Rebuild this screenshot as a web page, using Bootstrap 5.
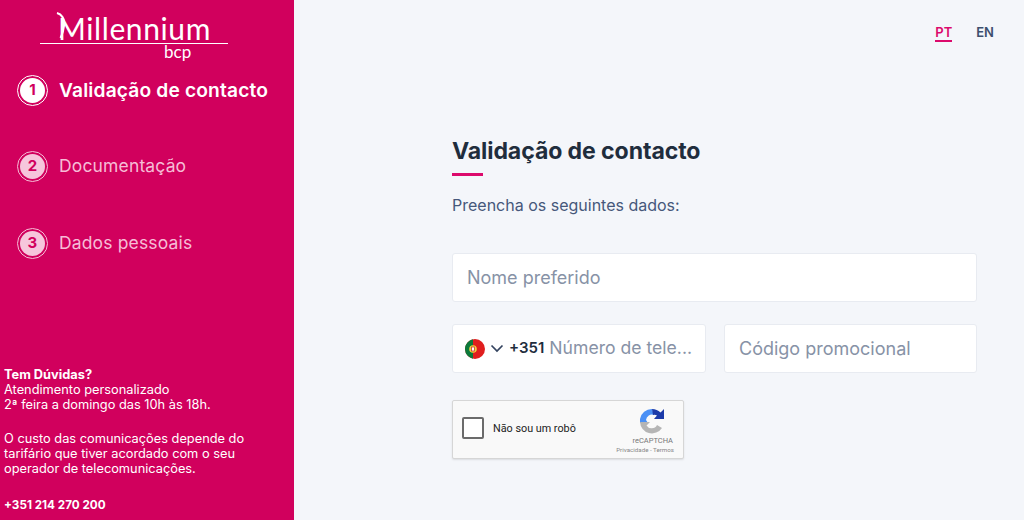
<!DOCTYPE html>
<html lang="pt">
<head>
    <meta charset="UTF-8">
    <title>Validação de contacto</title>
    <link href="https://cdn.jsdelivr.net/npm/bootstrap@5.3.3/dist/css/bootstrap.min.css" rel="stylesheet">
    <style>
        html, body { height: 100%; }
        body { background: #f4f6fa; font-family: "Inter", "Noto Sans", sans-serif; overflow: hidden; }
        .app-shell { height: 520px; }
        .side-panel { width: 294px; background: #d1005d; color: #fff; flex: none; }
        .logo-box { height: 60px; padding: 0 0 0 40px; width: 228px; position: relative; }
        .logo-word { font-family: "Lato", sans-serif; font-weight: 400; font-size: 30px; line-height: 30px; height: 30px; padding: 13px 0 0 18px; box-sizing: content-box; letter-spacing: .6px; }
        .logo-swoosh { position: absolute; left: 54px; top: 10px; }
        .logo-rule { height: 1px; background: #fff; width: 188px; }
        .logo-bcp { font-family: "Lato", sans-serif; font-weight: 400; font-size: 17px; line-height: 14px; padding: 1px 0 0 124px; }
        .step-list { padding: 14.5px 0 0 17px; }
        .step-row { height: 31px; margin-bottom: 45.5px; gap: 11px; font-size: 17.5px; color: #f6bcd6; font-weight: 400; letter-spacing: .15px; }
        .step-row.is-active { color: #fff; font-weight: 600; font-size: 19.2px; }
        .step-ring { width: 31px; height: 31px; border: 1.5px solid currentColor; border-radius: 50%; padding: 2px; flex: none; }
        .step-dot { width: 100%; height: 100%; border-radius: 50%; background: #f6c6dc; color: #d1005d; font-size: 15px; font-weight: 700; }
        .step-row.is-active .step-ring { border-color: #fff; }
        .step-row.is-active .step-dot { background: #fff; }
        .help-box { font-size: 12.8px; line-height: 15px; padding: 0 0 7px 4px; }
        .help-hours { margin: 0 0 19px; }
        .help-cost { margin: 0 0 22px; }
        .help-phone { font-size: 11.7px; font-weight: 700; }
        .main-pane { min-width: 0; }
        .lang-bar { height: 66px; padding: 25px 30px 0 0; gap: 24px; font-size: 13px; line-height: 15px; font-weight: 600; color: #3d4f6e; }
        .lang-on { color: #dc0a6c; border-bottom: 2px solid #dc0a6c; height: 17px; }
        .form-wrap { width: 525px; margin: 0 47px 0 158px; padding-top: 71px; }
        .form-title { font-size: 23.1px; font-weight: 700; color: #1f2d3d; line-height: 28px; margin: 0; letter-spacing: -.1px; }
        .title-mark { width: 31px; height: 3px; background: #dc0a6c; margin: 8px 0 18px; }
        .form-sub { font-size: 16px; color: #46587a; line-height: 22px; margin-bottom: 37px; }
        .field-box { background: #fff; border: 1px solid #e8ebf1; border-radius: 3px; height: 49px; font-size: 18px; color: #8792a6; padding: 0 14px; }
        .phone-col { width: 254px; flex: none; padding: 0 12px; font-size: 17.6px; }
        .phone-code { color: #1f2d3d; font-weight: 600; font-size: 15px; margin: 0 5px 0 0; }
        .phone-arrow { margin: 0 5px 0 5px; flex: none; }
        .phone-gap { gap: 18px; margin: 22px 0 27px; }
        .captcha-box { width: 232px; height: 59px; background: #f9f9f9; border: 1px solid #d6d6d6; border-radius: 2px; box-shadow: 0 1px 2px rgba(0,0,0,.1); font-family: Roboto, sans-serif; padding: 0 9px; }
        .captcha-check { width: 22px; height: 22px; background: #fff; border: 2px solid #6b6b6b; border-radius: 2px; flex: none; margin-top: -3px; }
        .captcha-label { font-size: 10.8px; color: #222; margin-left: 9px; }
        .captcha-brand { color: #777; line-height: 1; margin-top: 2px; }
        .captcha-icon { display: block; margin: 0 9px 0 auto; }
        .captcha-name { font-size: 7.5px; margin: 3px 1px 0 0; }
        .captcha-links { font-size: 6.2px; margin: 3px 0 0; white-space: nowrap; color: #888; }
    </style>
</head>
<body>
<div class="app-shell d-flex">
    <!-- lateral -->
    <aside class="side-panel d-flex flex-column">
        <div class="logo-box">
            <div class="logo-word">Millennium</div>
            <svg class="logo-swoosh" width="14" height="30" viewBox="0 0 14 30"><path d="M3 3C7 4 11 8 10 16 9.500 21 8 25 6.500 28" fill="none" stroke="#fff" stroke-width="2"/></svg>
            <div class="logo-rule"></div>
            <div class="logo-bcp">bcp</div>
        </div>
        <div class="step-list flex-grow-1">
            <div class="step-row is-active d-flex align-items-center">
                <span class="step-ring"><span class="step-dot d-flex align-items-center justify-content-center">1</span></span>
                <span>Validação de contacto</span>
            </div>
            <div class="step-row d-flex align-items-center">
                <span class="step-ring"><span class="step-dot d-flex align-items-center justify-content-center">2</span></span>
                <span>Documentação</span>
            </div>
            <div class="step-row d-flex align-items-center">
                <span class="step-ring"><span class="step-dot d-flex align-items-center justify-content-center">3</span></span>
                <span>Dados pessoais</span>
            </div>
        </div>
        <div class="help-box">
            <p class="help-hours"><b class="fw-bold">Tem Dúvidas?</b><br>Atendimento personalizado<br>2ª feira a domingo das 10h às 18h.</p>
            <p class="help-cost">O custo das comunicações depende do<br>tarifário que tiver acordado com o seu<br>operador de telecomunicações.</p>
            <div class="help-phone">+351 214 270 200</div>
        </div>
    </aside>

    <!-- conteudo -->
    <main class="main-pane flex-grow-1">
        <div class="lang-bar d-flex justify-content-end">
            <span class="lang-on">PT</span>
            <span>EN</span>
        </div>
        <div class="form-wrap">
            <h1 class="form-title">Validação de contacto</h1>
            <div class="title-mark"></div>
            <div class="form-sub">Preencha os seguintes dados:</div>
            <div class="field-box d-flex align-items-center">Nome preferido</div>
            <div class="phone-gap d-flex">
                <div class="field-box phone-col d-flex align-items-center">
                    <svg width="20" height="20" viewBox="0 0 20 20" class="flex-shrink-0">
                        <circle cx="10" cy="10" r="10" fill="#e01e1e"/>
                        <path d="M8 .2A10 10 0 0 0 8 19.800Z" fill="#0b7a3b"/>
                        <circle cx="8" cy="10" r="3.800" fill="#f3d33c"/>
                        <rect x="6.500" y="8" width="3" height="4" fill="#fff" stroke="#c33" stroke-width=".8"/>
                    </svg>
                    <svg width="14" height="9" viewBox="0 0 14 9" class="phone-arrow"><path d="M1.500 1.500 7 7l5.500-5.500" fill="none" stroke="#33435f" stroke-width="1.700"/></svg>
                    <span class="phone-code">+351</span>
                    <span class="text-nowrap">Número de tele...</span>
                </div>
                <div class="field-box flex-grow-1 d-flex align-items-center">Código promocional</div>
            </div>
            <div class="captcha-box d-flex align-items-center">
                <span class="captcha-check"></span>
                <span class="captcha-label flex-grow-1">Não sou um robô</span>
                <div class="captcha-brand text-end">
                    <svg class="captcha-icon" width="26" height="26" viewBox="0 0 26 26">
                        <path d="M1 15V11A12 12 0 0 1 13 1L15 7A6 6 0 0 0 7 12L9 15Z" fill="#4a90f5"/>
                        <path d="M13 1A12 12 0 0 1 21.500 4.500L25 1V11H15L18 7.500A6 6 0 0 0 14 7Z" fill="#1c3aa9"/>
                        <path d="M1 14H11L7.500 17.500A6 6 0 0 0 18 17L23 20A12 12 0 0 1 1 14Z" fill="#b5b5b5"/>
                    </svg>
                    <div class="captcha-name">reCAPTCHA</div>
                    <div class="captcha-links">Privacidade - Termos</div>
                </div>
            </div>
        </div>
    </main>
</div>
<script src="https://cdn.jsdelivr.net/npm/bootstrap@5.3.3/dist/js/bootstrap.bundle.min.js"></script>
</body>
</html>
